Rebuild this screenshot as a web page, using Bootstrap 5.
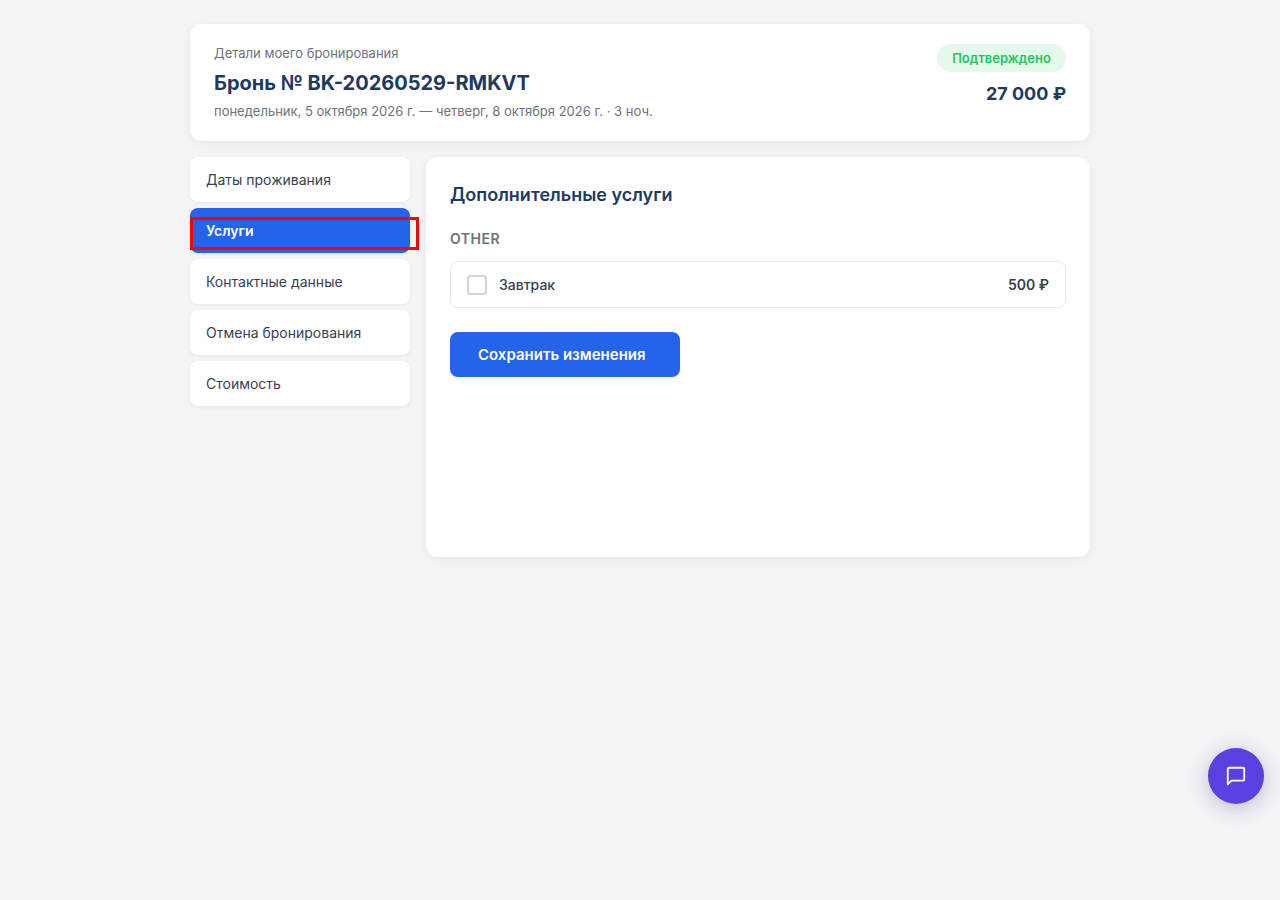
<!DOCTYPE html>
<html lang="ru">
<head>
<meta charset="utf-8">
<meta name="viewport" content="width=device-width, initial-scale=1">
<title>Детали моего бронирования</title>
<link href="https://cdn.jsdelivr.net/npm/bootstrap@5.3.0/dist/css/bootstrap.min.css" rel="stylesheet">
<style>
body{font-family:Inter,"Liberation Sans",sans-serif;background:#f3f4f6;color:#374151;font-size:14px;line-height:21px}
.booking{max-width:932px;padding:24px 16px}
.panel{background:#fff;border-radius:12px;box-shadow:0 2px 8px rgba(0,0,0,.06)}
.booking-head{padding:20px 24px}
.muted-line{font-size:13px;line-height:19px;color:#6b7280}
.booking-title{font-size:20px;line-height:30px;font-weight:700;color:#1e3a5f;margin:5px 0 4px}
.status{min-width:129px;text-align:center;font-size:13px;line-height:20px;font-weight:600;color:#22c55e;background:#e4f8eb;border-radius:20px;padding:4px 12px}
.total{font-size:18px;line-height:27px;font-weight:700;color:#1e3a5f}
.side{width:220px;gap:6px}
.side-link{background:#fff;border-radius:8px;padding:12px 16px;color:#374151;text-decoration:none;box-shadow:0 1px 4px rgba(0,0,0,.06)}
.side-link.active{background:#2563eb;color:#fff;font-weight:600}
.marker{left:0;top:9px;width:229px;height:33px;border:3px solid #f00;pointer-events:none;z-index:2}
.content{padding:24px;min-height:400px}
.section-title{font-size:18px;line-height:27px;font-weight:600;color:#1e3a5f;margin-bottom:20px}
.group-title{font-size:14px;line-height:21px;font-weight:600;color:#6b7280;letter-spacing:.5px;margin-bottom:12px}
.service{border:1px solid #e5e7eb;border-radius:8px;padding:12px 16px;font-weight:500}
.tick{width:20px;height:20px;margin:0;border:2px solid #d1d5db}
.price{font-weight:600}
.save,.save:hover{min-width:230px;background:#2563eb;color:#fff;font-size:15px;line-height:21px;font-weight:600;border:0;border-radius:8px;padding:12px 28px;margin-top:24px}
.chat{right:16px;bottom:96px;width:56px;height:56px;background:#5b3fe0;color:#fff;border:0;box-shadow:0 4px 20px rgba(60,50,120,.3)}
</style>
</head>
<body>
<main class="booking container-fluid d-flex flex-column gap-3">
<header class="panel booking-head d-flex justify-content-between align-items-start">
<div>
<div class="muted-line">Детали моего бронирования</div>
<h1 class="booking-title">Бронь № BK-20260529-RMKVT</h1>
<div class="muted-line">понедельник, 5 октября 2026 г. — четверг, 8 октября 2026 г. · 3 ноч.</div>
</div>
<div class="d-flex flex-column align-items-end gap-2">
<span class="status">Подтверждено</span>
<span class="total">27 000 ₽</span>
</div>
</header>
<div class="d-flex align-items-start gap-3">
<nav class="side d-flex flex-column flex-shrink-0" aria-label="Разделы">
<a class="side-link" href="#dates">Даты проживания</a>
<a class="side-link active position-relative" href="#services" aria-current="page">Услуги<span class="marker position-absolute"></span></a>
<a class="side-link" href="#contacts">Контактные данные</a>
<a class="side-link" href="#cancel">Отмена бронирования</a>
<a class="side-link" href="#cost">Стоимость</a>
</nav>
<section class="panel content flex-grow-1">
<h2 class="section-title">Дополнительные услуги</h2>
<h3 class="group-title">OTHER</h3>
<div class="service d-flex align-items-center">
<input class="form-check-input tick" type="checkbox" id="breakfast">
<label class="flex-grow-1 ps-2 ms-1" for="breakfast">Завтрак</label>
<span class="price">500 ₽</span>
</div>
<button type="button" class="btn save text-start">Сохранить изменения</button>
</section>
</div>
</main>
<button type="button" class="chat position-fixed rounded-circle d-flex align-items-center justify-content-center" aria-label="Открыть чат">
<svg width="22" height="22" viewBox="0 0 24 24" fill="none" stroke="currentColor" stroke-width="2" stroke-linecap="round" stroke-linejoin="round"><path d="M21 15.500a1.500 1.500 0 0 1-1.500 1.500H7l-4 4V4.500a1.500 1.500 0 0 1 1.500-1.500h15a1.500 1.500 0 0 1 1.500 1.500z"/></svg>
</button>
<script src="https://cdn.jsdelivr.net/npm/bootstrap@5.3.0/dist/js/bootstrap.bundle.min.js"></script>
</body>
</html>
